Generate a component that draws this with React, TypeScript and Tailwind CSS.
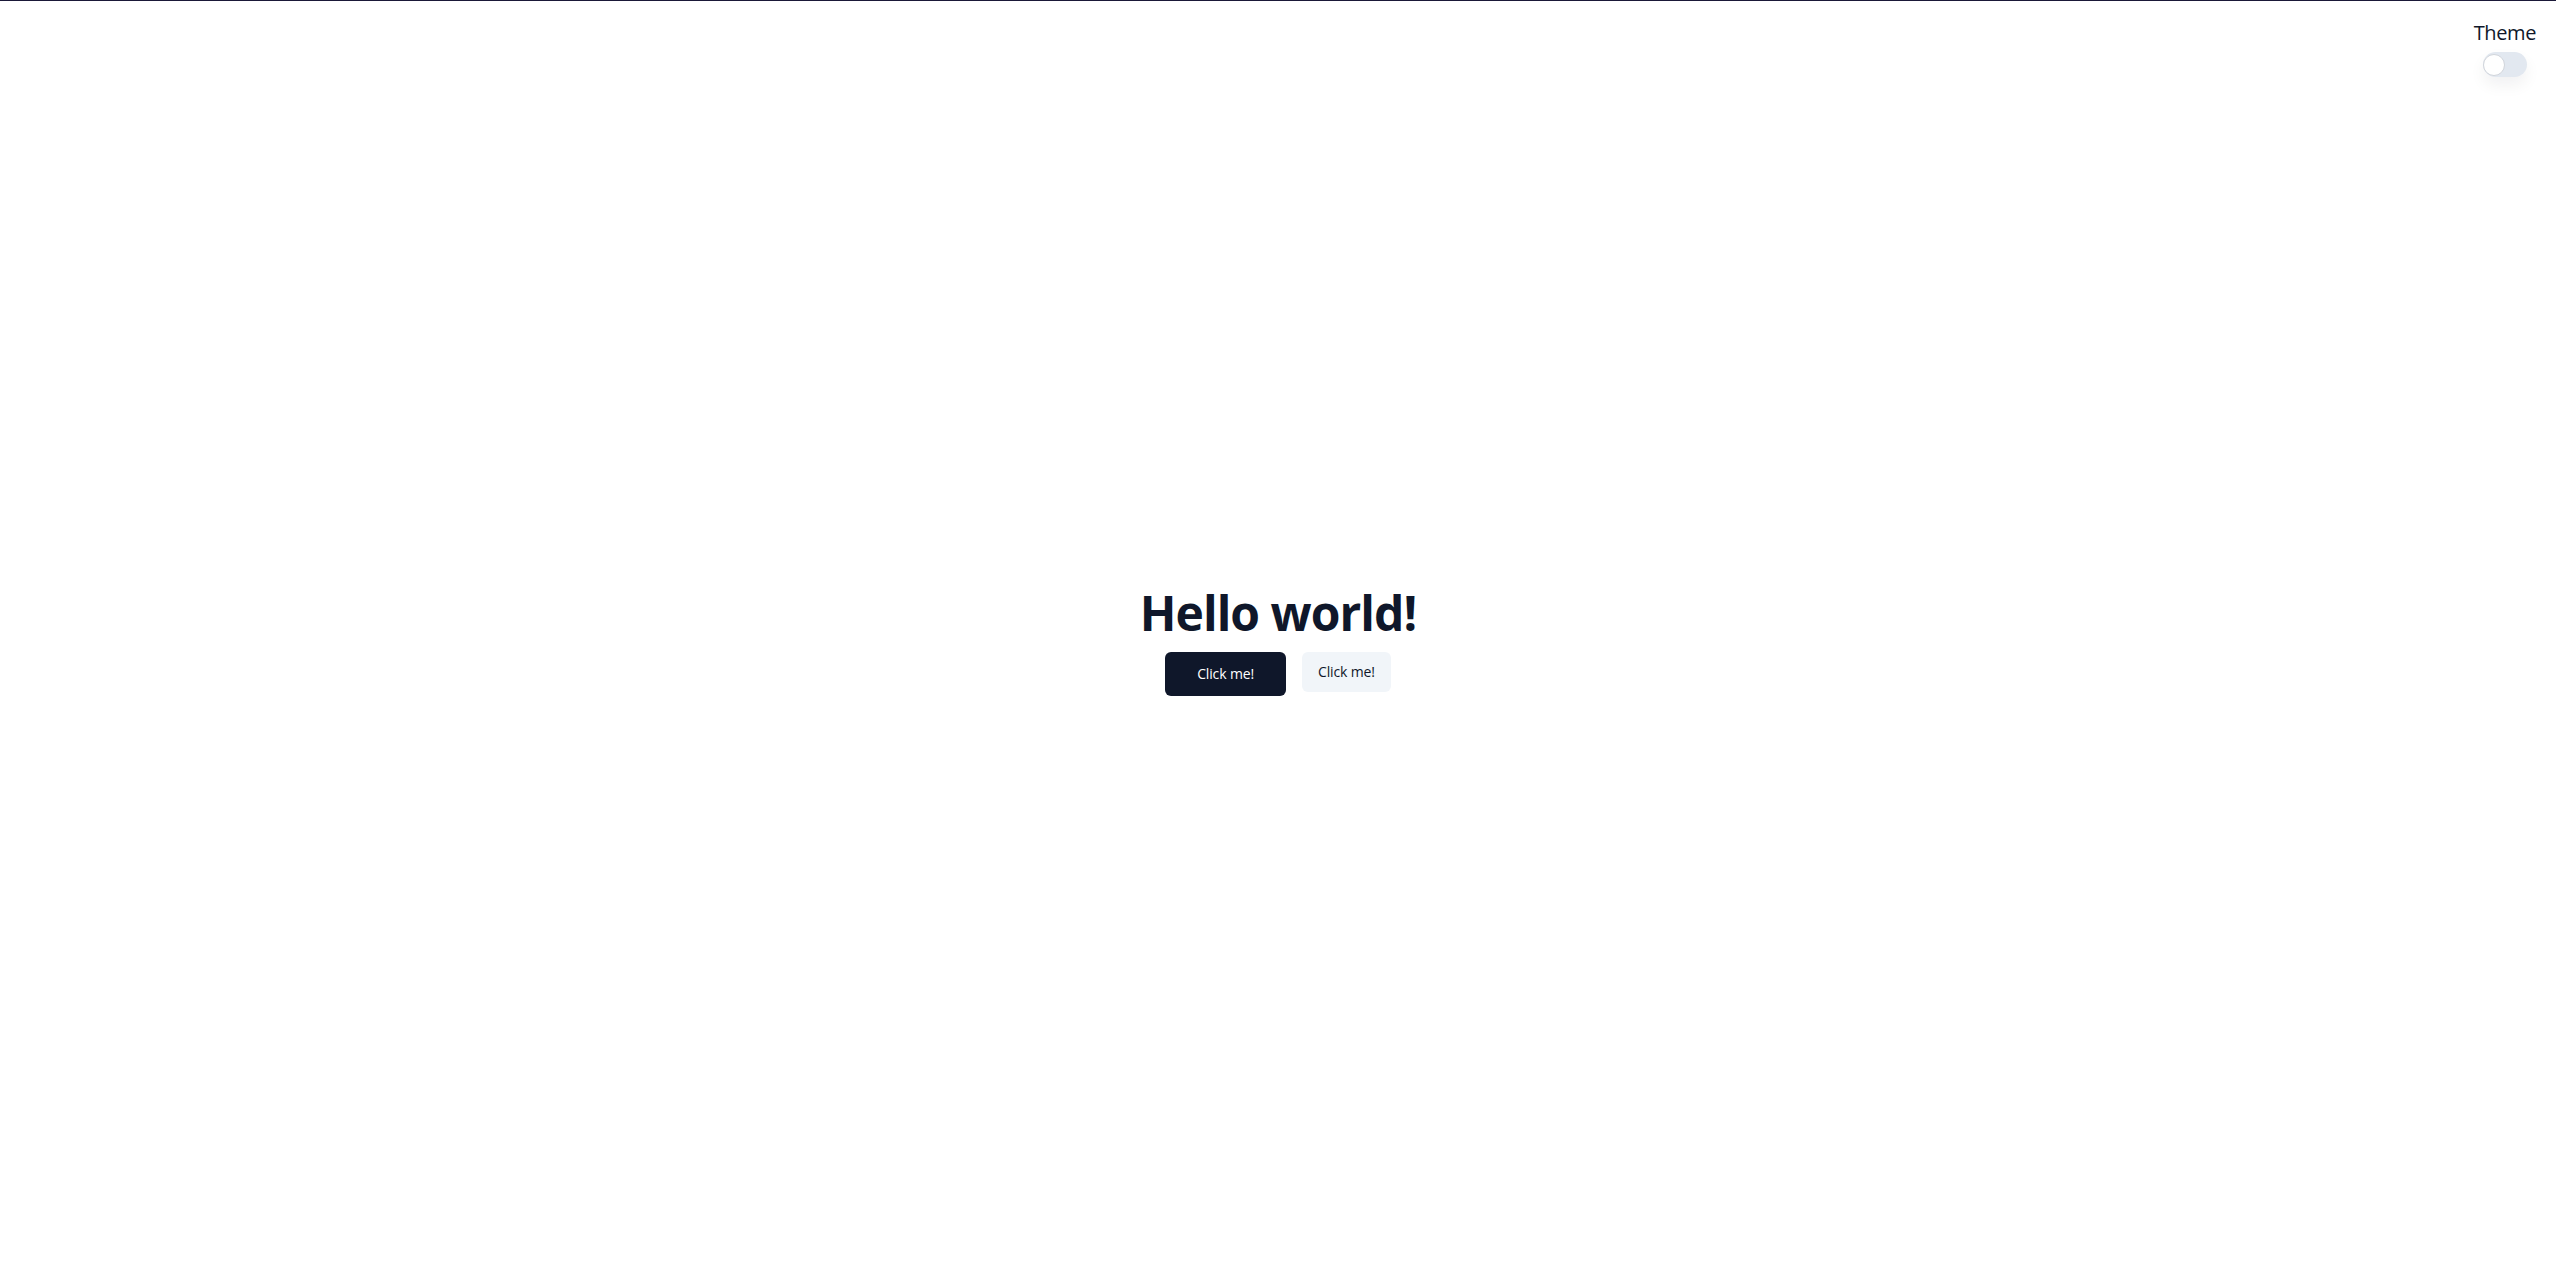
import { useState } from "react";

function ThemeToggle() {
  const [on, setOn] = useState(false);
  return (
    <div className="absolute top-[18px] right-5 flex flex-col items-center gap-[5px]">
      <span className="text-xl tracking-[-0.02em] text-[#0f172a]">Theme</span>
      <button
        onClick={() => setOn(!on)}
        className="relative h-[25px] w-[44px] rounded-full bg-[#e2e8f0] shadow-[0_8px_16px_rgba(15,23,42,0.06)]"
        aria-label="Toggle theme"
      >
        <span
          className={
            on
              ? "absolute left-[22px] top-[1.5px] h-[22px] w-[22px] rounded-full bg-white border border-[#d1d5db]"
              : "absolute left-0 top-[1.5px] h-[22px] w-[22px] rounded-full bg-white border border-[#d1d5db]"
          }
        />
      </button>
    </div>
  );
}

export default function App() {
  return (
    <div
      className="relative h-screen w-full border-t border-[#1a1838] bg-white text-[#0f172a]"
      style={{ fontFamily: '"Open Sans", "Noto Sans", sans-serif' }}
    >
      <ThemeToggle />

      <main className="flex h-full flex-col items-center justify-center pt-[6px]">
        <h1 className="text-5xl font-bold leading-none tracking-[-0.02em]">Hello world!</h1>
        <div className="mt-[15px] flex items-start gap-4">
          <button className="h-11 rounded-md bg-[#0f172a] px-8 text-sm tracking-[-0.01em] text-white">Click me!</button>
          <button className="h-10 rounded-md bg-[#f1f5f9] px-4 text-sm tracking-[-0.01em] text-[#0f172a]">Click me!</button>
        </div>
      </main>
    </div>
  );
}
